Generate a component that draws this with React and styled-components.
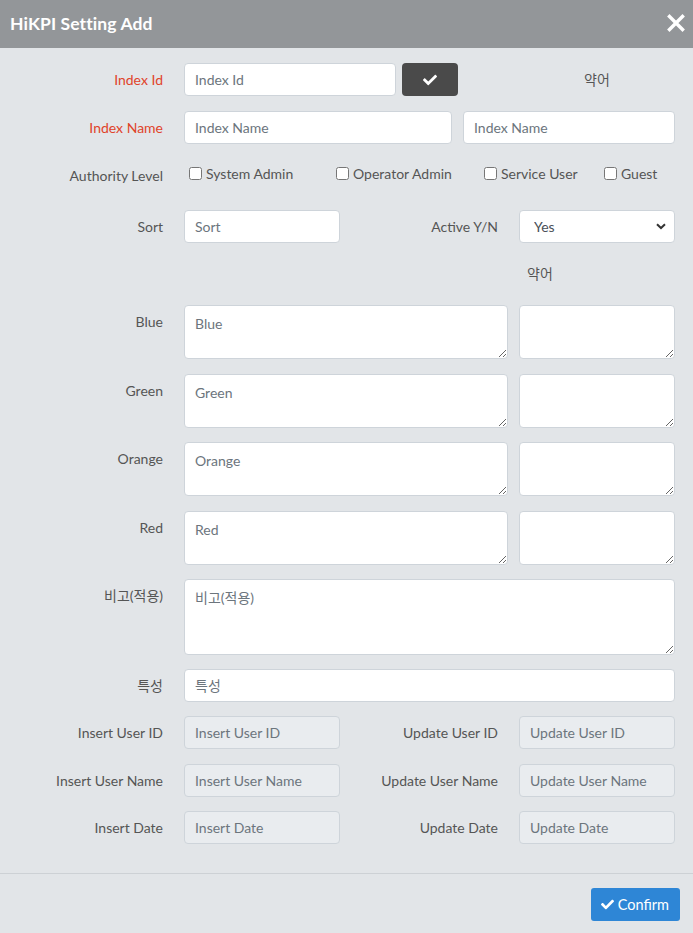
import React from "react";
import styled, { createGlobalStyle } from "styled-components";
import { FaCheck } from "react-icons/fa";

const GlobalStyle = createGlobalStyle`
	html, body {
		margin: 0;
		padding: 0;
		background: #e2e5e8;
	}
	body {
		font-family: "Lato", "Noto Sans CJK KR", sans-serif;
		font-size: 14px;
		color: #555;
	}
	* {
		box-sizing: border-box;
	}
`;

const Modal = styled.div`
	width: 693px;
	min-height: 933px;
	display: flex;
	flex-direction: column;
	background: #e2e5e8;
`;

const Header = styled.div`
	height: 48px;
	background: #939699;
	display: flex;
	align-items: center;
	justify-content: space-between;
	padding: 0 7px 2px 10px;
	h1 {
		margin: 0;
		color: #fff;
		font-size: 17.5px;
		font-weight: 700;
		letter-spacing: 0.1px;
	}
`;

const CloseButton = styled.button`
	border: 0;
	background: none;
	padding: 0;
	width: 20px;
	height: 20px;
	display: flex;
	align-items: center;
	justify-content: center;
	cursor: pointer;
`;

const Body = styled.div`
	padding: 15px 18px 29px 0;
	border-bottom: 1px solid #cdd1d5;
`;

const Row = styled.div`
	display: flex;
	align-items: flex-start;
	margin-bottom: ${(p) => p.gap ?? 15}px;
`;

const Label = styled.label`
	flex: 0 0 ${(p) => p.width ?? 163}px;
	margin-right: 21px;
	text-align: right;
	line-height: 33px;
	white-space: nowrap;
	color: ${(p) => (p.required ? "#e0432a" : "#555")};
`;

const Fields = styled.div`
	flex: 1;
	display: flex;
	align-items: flex-start;
	gap: ${(p) => p.gap ?? 11}px;
`;

const Input = styled.input`
	width: ${(p) => (p.width ? `${p.width}px` : "100%")};
	flex: ${(p) => (p.width ? "none" : "1")};
	height: 33px;
	padding: 0 10px;
	border: 1px solid #ced4da;
	border-radius: 4px;
	background: ${(p) => (p.disabled ? "#e9ecef" : "#fff")};
	font: inherit;
	color: #495057;
	outline: none;
	&::placeholder {
		color: #6c757d;
		opacity: 1;
	}
`;

const TextArea = styled.textarea`
	width: ${(p) => (p.width ? `${p.width}px` : "100%")};
	flex: ${(p) => (p.width ? "none" : "1")};
	height: ${(p) => p.height ?? 54}px;
	padding: 7px 10px;
	border: 1px solid #ced4da;
	border-radius: 4px;
	background: #fff;
	font: inherit;
	line-height: 21px;
	color: #495057;
	outline: none;
	&::placeholder {
		color: #6c757d;
		opacity: 1;
	}
`;

const CheckButton = styled.button`
	width: 56px;
	height: 33px;
	border: 0;
	border-radius: 4px;
	background: #4a4a4a;
	display: flex;
	align-items: center;
	justify-content: center;
	cursor: pointer;
`;

const Abbr = styled.div`
	width: 156px;
	margin-left: auto;
	line-height: ${(p) => p.lineHeight ?? 33}px;
	text-align: ${(p) => p.align ?? "center"};
	padding-left: ${(p) => (p.align === "left" ? 8 : 0)}px;
	color: #555;
`;

const SideLabel = styled.label`
	flex: 1;
	margin-right: 21px;
	text-align: right;
	line-height: 33px;
	white-space: nowrap;
`;

const SelectWrap = styled.div`
	position: relative;
	width: 156px;
	height: 33px;
	svg {
		position: absolute;
		right: 9px;
		top: 13px;
		pointer-events: none;
	}
`;

const Select = styled.select`
	width: 100%;
	height: 100%;
	appearance: none;
	padding: 0 10px 0 14px;
	border: 1px solid #ced4da;
	border-radius: 4px;
	background: #fff;
	font: inherit;
	color: #495057;
	outline: none;
`;

const CheckGroup = styled.div`
	display: grid;
	grid-template-columns: 147px 148px 120px auto;
	padding-left: 5px;
	height: 36px;
	align-items: start;
	padding-top: 6px;
`;

const CheckOption = styled.label`
	display: flex;
	align-items: center;
	gap: 4px;
	white-space: nowrap;
	input {
		margin: 0;
		width: 13px;
		height: 13px;
	}
`;

const Footer = styled.div`
	display: flex;
	justify-content: flex-end;
	padding: 14px 13px 13px;
`;

const ConfirmButton = styled.button`
	display: flex;
	align-items: center;
	gap: 4px;
	height: 33px;
	padding: 0 11px 0 10px;
	border: 0;
	border-radius: 3px;
	background: #2e86d6;
	color: #fff;
	font: inherit;
	font-size: 14.5px;
	cursor: pointer;
`;

const CloseIcon = () => (
	<svg width="18" height="18" viewBox="0 0 18 18">
		<path d="M2.5 2.5 L15.5 15.5 M15.5 2.5 L2.5 15.5" stroke="#fff" strokeWidth="3.4" strokeLinecap="square" />
	</svg>
);

const Chevron = () => (
	<svg width="10" height="7" viewBox="0 0 10 7">
		<path d="M1 1.2 L5 5 L9 1.2" fill="none" stroke="#333" strokeWidth="2" />
	</svg>
);

const colors = ["Blue", "Green", "Orange", "Red"];

const authorities = ["System Admin", "Operator Admin", "Service User", "Guest"];

const AuditRow = ({ left, right, gap = 14.5 }) => (
	<Row gap={gap}>
		<Label>{left}</Label>
		<Fields gap={0}>
			<Input width={156} placeholder={left} disabled />
			<SideLabel>{right}</SideLabel>
			<Input width={156} placeholder={right} disabled />
		</Fields>
	</Row>
);

export default function App() {
	return (
		<Modal>
			<GlobalStyle />
			<Header>
				<h1>HiKPI Setting Add</h1>
				<CloseButton aria-label="close">
					<CloseIcon />
				</CloseButton>
			</Header>
			<Body>
				<Row>
					<Label required>Index Id</Label>
					<Fields gap={6}>
						<Input width={212} placeholder="Index Id" />
						<CheckButton>
							<FaCheck color="#fff" size={14} />
						</CheckButton>
						<Abbr>약어</Abbr>
					</Fields>
				</Row>
				<Row>
					<Label required>Index Name</Label>
					<Fields>
						<Input placeholder="Index Name" />
						<Input width={212} placeholder="Index Name" />
					</Fields>
				</Row>
				<Row>
					<Label>Authority Level</Label>
					<CheckGroup>
						{authorities.map((a) => (
							<CheckOption key={a}>
								<input type="checkbox" />
								{a}
							</CheckOption>
						))}
					</CheckGroup>
				</Row>
				<Row>
					<Label>Sort</Label>
					<Fields gap={0}>
						<Input width={156} placeholder="Sort" />
						<SideLabel>Active Y/N</SideLabel>
						<SelectWrap>
							<Select defaultValue="Y">
								<option value="Y">Yes</option>
								<option value="N">No</option>
							</Select>
							<Chevron />
						</SelectWrap>
					</Fields>
				</Row>
				<Row>
					<Label />
					<Fields>
						<Abbr lineHeight={32} align="left">약어</Abbr>
					</Fields>
				</Row>
				{colors.map((c) => (
					<Row key={c} gap={14.5}>
						<Label>{c}</Label>
						<Fields>
							<TextArea placeholder={c} />
							<TextArea width={156} />
						</Fields>
					</Row>
				))}
				<Row gap={14}>
					<Label>비고(적용)</Label>
					<Fields>
						<TextArea height={76} placeholder="비고(적용)" />
					</Fields>
				</Row>
				<Row gap={14}>
					<Label>특성</Label>
					<Fields>
						<Input placeholder="특성" />
					</Fields>
				</Row>
				<AuditRow left="Insert User ID" right="Update User ID" />
				<AuditRow left="Insert User Name" right="Update User Name" />
				<AuditRow left="Insert Date" right="Update Date" gap={0} />
			</Body>
			<Footer>
				<ConfirmButton>
					<FaCheck size={13} />
					Confirm
				</ConfirmButton>
			</Footer>
		</Modal>
	);
}
